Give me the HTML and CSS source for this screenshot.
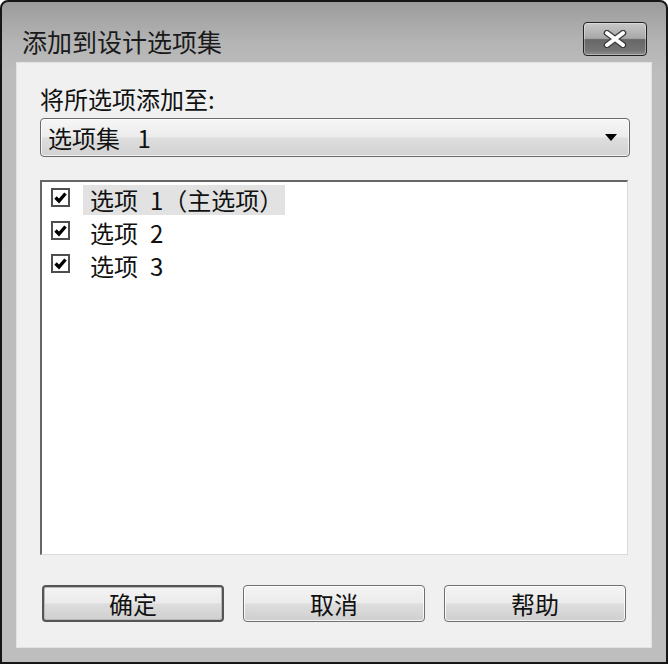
FILE: index.html
```html
<!DOCTYPE html>
<html lang="zh-CN">
<head>
    <meta charset="UTF-8">
    <title>添加到设计选项集</title>
    <link rel="stylesheet" href="styles.css">
</head>
<body>
    <div class="window">
        <div class="titlebar">
            <span class="title">添加到设计选项集</span>
            <button class="close-btn" aria-label="关闭">
                <svg width="24" height="18" viewBox="0 0 24 18">
                    <path d="M4 3 L20 15 M20 3 L4 15" stroke="#3a3a3a" stroke-width="6.5" stroke-linecap="round"/>
                    <path d="M4 3 L20 15 M20 3 L4 15" stroke="#ffffff" stroke-width="4" stroke-linecap="round"/>
                </svg>
            </button>
        </div>
        <div class="client">
            <label class="field-label">将所选项添加至:</label>
            <div class="combo">
                <span class="combo-text">选项集&ensp; 1</span>
                <span class="combo-arrow"></span>
            </div>
            <div class="listbox">
                <div class="list-row">
                    <span class="checkbox">
                        <svg width="15" height="15" viewBox="0 0 15 15"><path d="M2.5 7.5 L6 11 L12.5 3.5" fill="none" stroke="#000" stroke-width="3.4"/></svg>
                    </span>
                    <span class="row-text selected">选项&ensp;1（主选项）</span>
                </div>
                <div class="list-row">
                    <span class="checkbox">
                        <svg width="15" height="15" viewBox="0 0 15 15"><path d="M2.5 7.5 L6 11 L12.5 3.5" fill="none" stroke="#000" stroke-width="3.4"/></svg>
                    </span>
                    <span class="row-text">选项&ensp;2</span>
                </div>
                <div class="list-row">
                    <span class="checkbox">
                        <svg width="15" height="15" viewBox="0 0 15 15"><path d="M2.5 7.5 L6 11 L12.5 3.5" fill="none" stroke="#000" stroke-width="3.4"/></svg>
                    </span>
                    <span class="row-text">选项&ensp;3</span>
                </div>
            </div>
            <div class="button-row">
                <button class="btn default">确定</button>
                <button class="btn">取消</button>
                <button class="btn">帮助</button>
            </div>
        </div>
    </div>
</body>
</html>
```

FILE: styles.css
```css
html, body {
    margin: 0;
    padding: 0;
    background: #ffffff;
}
body {
    font-family: "Noto Sans CJK SC", "Liberation Sans", sans-serif;
    color: #111;
}
.window {
    box-sizing: border-box;
    width: 668px;
    height: 664px;
    border: 2px solid #161616;
    border-radius: 8px 8px 0 0;
    background: linear-gradient(to bottom, #9c9c9c 0px, #b4b4b4 40px, #bdbdbd 70px, #bebebe 100%);
    padding: 0 14px 14px 14px;
    display: flex;
    flex-direction: column;
}
.titlebar {
    height: 60px;
    display: flex;
    justify-content: space-between;
    align-items: flex-start;
}
.title {
    font-size: 25px;
    line-height: 30px;
    margin-top: 24px;
    padding-left: 6px;
    color: #1a1a1a;
}
.close-btn {
    width: 64px;
    height: 34px;
    margin-top: 20px;
    margin-right: 5px;
    padding: 0;
    border: 1px solid #222;
    border-radius: 4px;
    background: linear-gradient(to bottom, #c8c8c8 0%, #a8a8a8 48%, #676767 52%, #747474 85%, #8e8e8e 100%);
    box-shadow: inset 0 0 0 1px rgba(255, 255, 255, 0.35);
    display: flex;
    align-items: center;
    justify-content: center;
}
.client {
    flex: 1;
    background: #f0f0f0;
    padding: 22px 22px 0 24px;
    display: flex;
    flex-direction: column;
    box-shadow: inset 0 0 0 1px #e2e2e2;
}
.field-label {
    font-size: 24px;
    line-height: 30px;
    height: 30px;
}
.combo {
    margin-top: 4px;
    height: 39px;
    box-sizing: border-box;
    border: 1px solid #6a6a6a;
    border-radius: 4px;
    background: linear-gradient(to bottom, #f6f6f6 0%, #ececec 48%, #dedede 52%, #d2d2d2 100%);
    box-shadow: inset 0 0 0 1px rgba(255, 255, 255, 0.7);
    display: flex;
    align-items: center;
    justify-content: space-between;
    padding: 0 12px 0 7px;
}
.combo-text {
    font-size: 24px;
    line-height: 30px;
}
.combo-arrow {
    width: 0;
    height: 0;
    border-left: 6px solid transparent;
    border-right: 6px solid transparent;
    border-top: 7px solid #000;
}
.listbox {
    margin-top: 23px;
    width: 588px;
    height: 375px;
    box-sizing: border-box;
    background: #fff;
    border-top: 2px solid #666;
    border-left: 2px solid #666;
    border-right: 1px solid #dadada;
    border-bottom: 1px solid #dadada;
    padding-top: 3px;
}
.list-row {
    height: 33px;
    display: flex;
    align-items: flex-start;
}
.checkbox {
    box-sizing: border-box;
    width: 19px;
    height: 19px;
    margin: 3px 13px 0 9px;
    border: 2px solid #4e4e4e;
    background: #fff;
    display: flex;
    align-items: center;
    justify-content: center;
}
.row-text {
    font-size: 24px;
    line-height: 30px;
    height: 30px;
    padding: 0 2px 0 7px;
    white-space: pre;
}
.row-text.selected {
    background: #e2e2e2;
}
.button-row {
    margin-top: 30px;
    padding: 0 2px;
    display: flex;
    gap: 19px;
}
.btn {
    width: 182px;
    height: 37px;
    box-sizing: border-box;
    font-family: inherit;
    font-size: 24px;
    line-height: 30px;
    color: #111;
    padding: 0;
    border: 1px solid #707070;
    border-radius: 4px;
    background: linear-gradient(to bottom, #f4f4f4 0%, #ebebeb 48%, #dddddd 52%, #cfcfcf 100%);
    box-shadow: inset 0 0 0 1px rgba(255, 255, 255, 0.8);
}
.btn.default {
    border: 2px solid #555;
    box-shadow: inset 0 0 0 1px #b8b8b8;
}
```
